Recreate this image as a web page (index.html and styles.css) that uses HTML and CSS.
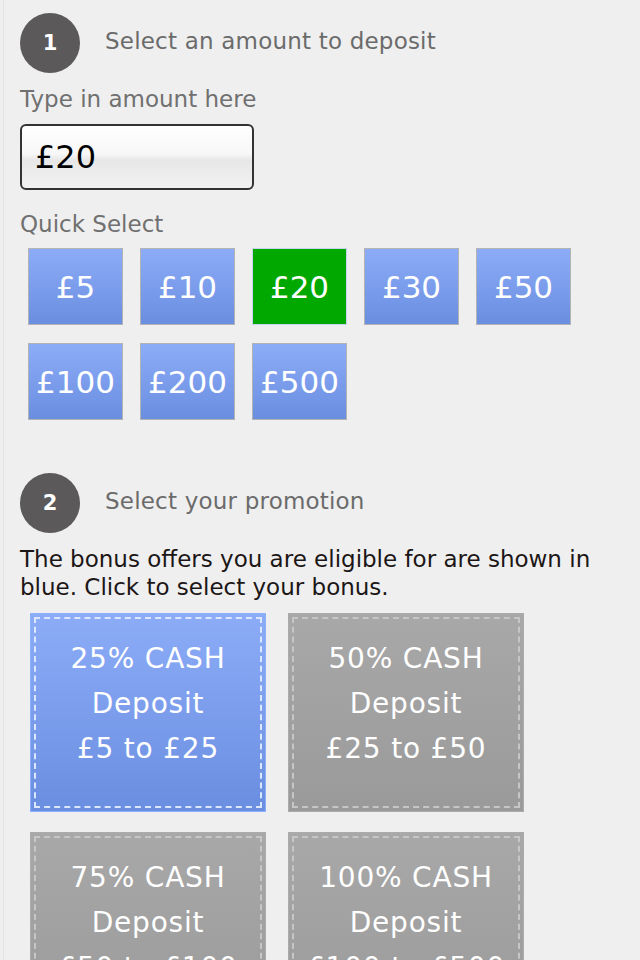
FILE: index.html
```html
<!DOCTYPE html>
<html>
<head>
<meta charset="utf-8">
<link rel="stylesheet" href="styles.css">
</head>
<body>
<div class="page">
  <div class="step step-first">
    <div class="circle">1</div>
    <div class="step-title">Select an amount to deposit</div>
  </div>
  <div class="label label-type">Type in amount here</div>
  <div class="amount-input">£20</div>
  <div class="label label-quick">Quick Select</div>
  <div class="quick-grid">
    <div class="qbtn">£5</div>
    <div class="qbtn">£10</div>
    <div class="qbtn qbtn-active">£20</div>
    <div class="qbtn">£30</div>
    <div class="qbtn">£50</div>
    <div class="qbtn">£100</div>
    <div class="qbtn">£200</div>
    <div class="qbtn">£500</div>
  </div>
  <div class="step step-second">
    <div class="circle">2</div>
    <div class="step-title">Select your promotion</div>
  </div>
  <p class="info">The bonus offers you are eligible for are shown in blue. Click to select your bonus.</p>
  <div class="promo-grid">
    <div class="promo promo-active"><div class="promo-inner"><span>25% CASH</span><span>Deposit</span><span>£5 to £25</span></div></div>
    <div class="promo"><div class="promo-inner"><span>50% CASH</span><span>Deposit</span><span>£25 to £50</span></div></div>
    <div class="promo"><div class="promo-inner"><span>75% CASH</span><span>Deposit</span><span>£50 to £100</span></div></div>
    <div class="promo"><div class="promo-inner"><span>100% CASH</span><span>Deposit</span><span>£100 to £500</span></div></div>
  </div>
</div>
</body>
</html>
```
FILE: styles.css
```css
html, body {
  margin: 0;
  padding: 0;
  background: #efefef;
  height: 100%;
  overflow: hidden;
}
.page {
  font-family: "DejaVu Sans", sans-serif;
  border-left: 1px solid #e4e4e4;
  margin-left: 3px;
  min-height: 960px;
  box-sizing: border-box;
  padding-left: 16px;
}
.step {
  display: flex;
  align-items: center;
  gap: 25px;
}
.step-first {
  padding-top: 13px;
}
.step-second {
  margin-top: 53px;
}
.circle {
  width: 60px;
  height: 60px;
  flex: none;
  border-radius: 50%;
  background: #5b595a;
  color: #fff;
  font-size: 21px;
  font-weight: bold;
  display: flex;
  align-items: center;
  justify-content: center;
}
.step-title {
  color: #6b6b6b;
  font-size: 23px;
  letter-spacing: 0.2px;
  position: relative;
  top: -2px;
}
.label {
  color: #707070;
  font-size: 23px;
  line-height: 28px;
}
.label-type {
  margin-top: 12px;
}
.amount-input {
  margin-top: 11px;
  width: 234px;
  height: 66px;
  box-sizing: border-box;
  border: 2px solid #333;
  border-radius: 6px;
  background: linear-gradient(#ffffff 0%, #f7f7f7 45%, #e7e7e7 55%, #f2f2f2 100%);
  font-size: 32px;
  color: #000;
  display: flex;
  align-items: center;
  padding-left: 13px;
}
.label-quick {
  margin-top: 20px;
}
.quick-grid {
  margin-top: 10px;
  margin-left: 8px;
  display: grid;
  grid-template-columns: repeat(5, 95px);
  column-gap: 17px;
  row-gap: 18px;
}
.qbtn {
  height: 77px;
  box-sizing: border-box;
  border: 1px solid #b3b3b3;
  background: linear-gradient(#8cacf7, #6a8ee0);
  color: #fff;
  font-size: 31px;
  display: flex;
  align-items: center;
  justify-content: center;
}
.qbtn-active {
  background: #00a800;
  border-color: #c7d3f0;
}
.info {
  margin: 12px 0 0 0;
  color: #1c1616;
  font-size: 23px;
  line-height: 28px;
  width: 600px;
}
.promo-grid {
  margin-top: 12px;
  margin-left: 10px;
  display: grid;
  grid-template-columns: repeat(2, 236px);
  column-gap: 22px;
  row-gap: 20px;
}
.promo {
  height: 199px;
  box-sizing: border-box;
  border: 1px solid #ababab;
  background: linear-gradient(#a8a8a8, #9a9a9a);
  padding: 3px;
}
.promo-active {
  border-color: #8bb0ff;
  background: linear-gradient(#8cacf7, #6a8ee0);
}
.promo-inner {
  height: 100%;
  box-sizing: border-box;
  border: 2px dashed #c6c6c6;
  display: flex;
  flex-direction: column;
  align-items: center;
  padding-top: 17px;
  color: #fff;
  font-size: 28px;
  letter-spacing: 0.8px;
  line-height: 45px;
  white-space: nowrap;
}
.promo-active .promo-inner {
  border-color: #dbe6ff;
}
```
